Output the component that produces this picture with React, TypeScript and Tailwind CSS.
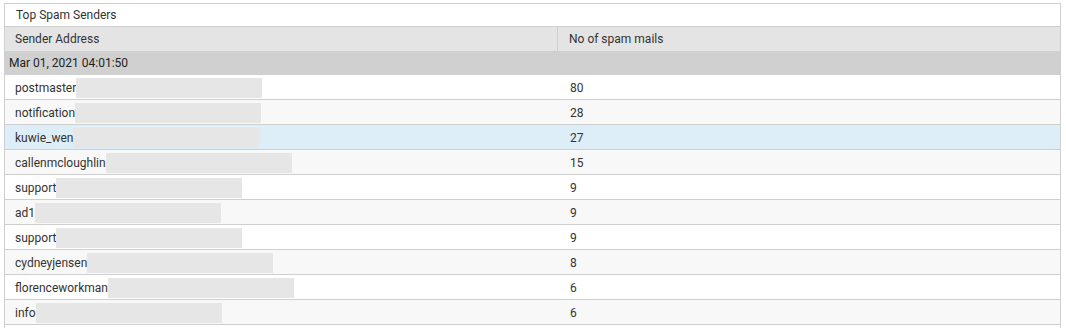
const rows = [
  { name: "postmaster", count: 80 },
  { name: "notification", count: 28 },
  { name: "kuwie_wen", count: 27, selected: true },
  { name: "callenmcloughlin", count: 15 },
  { name: "support", count: 9 },
  { name: "ad1", count: 9 },
  { name: "support", count: 9 },
  { name: "cydneyjensen", count: 8 },
  { name: "florenceworkman", count: 6 },
  { name: "info", count: 6 },
];

function Redacted() {
  return <span className="inline-block h-[20px] w-[186px] bg-[#e6e6e6] align-middle" />;
}

export default function App() {
  return (
    <div className="h-[328px] w-[1066px] overflow-hidden bg-white pl-[4px] pt-[3px] font-['Roboto','Liberation_Sans',sans-serif] text-[12px] text-[#333]">
      <div className="w-[1057px] border border-b-0 border-[#cfcfcf]">
        <div className="flex h-[23px] items-center border-b border-[#cfcfcf] pl-[11px]">
          Top Spam Senders
        </div>
        <div className="flex h-[24px] bg-[#e4e4e4]">
          <div className="flex w-[553px] items-center border-r border-[#cfcfcf] pl-[10px]">
            Sender Address
          </div>
          <div className="flex items-center pl-[11px]">No of spam mails</div>
        </div>
        <div className="flex h-[24px] items-center bg-[#d0d0d0] pl-[4px] text-[#222]">
          Mar 01, 2021 04:01:50
        </div>
        {rows.map((r, i) => (
          <div
            key={i}
            className={
              "flex h-[25px] border-b border-[#cfcfcf] pt-[2px] " +
              (r.selected ? "bg-[#deeef8]" : i % 2 === 1 ? "bg-[#f8f8f8]" : "bg-white")
            }
          >
            <div className="flex w-[554px] items-center pl-[10px]">
              <span>{r.name}</span>
              <Redacted />
            </div>
            <div className="flex items-center pl-[11px]">{r.count}</div>
          </div>
        ))}
        <div className="h-[10px]" />
      </div>
    </div>
  );
}
